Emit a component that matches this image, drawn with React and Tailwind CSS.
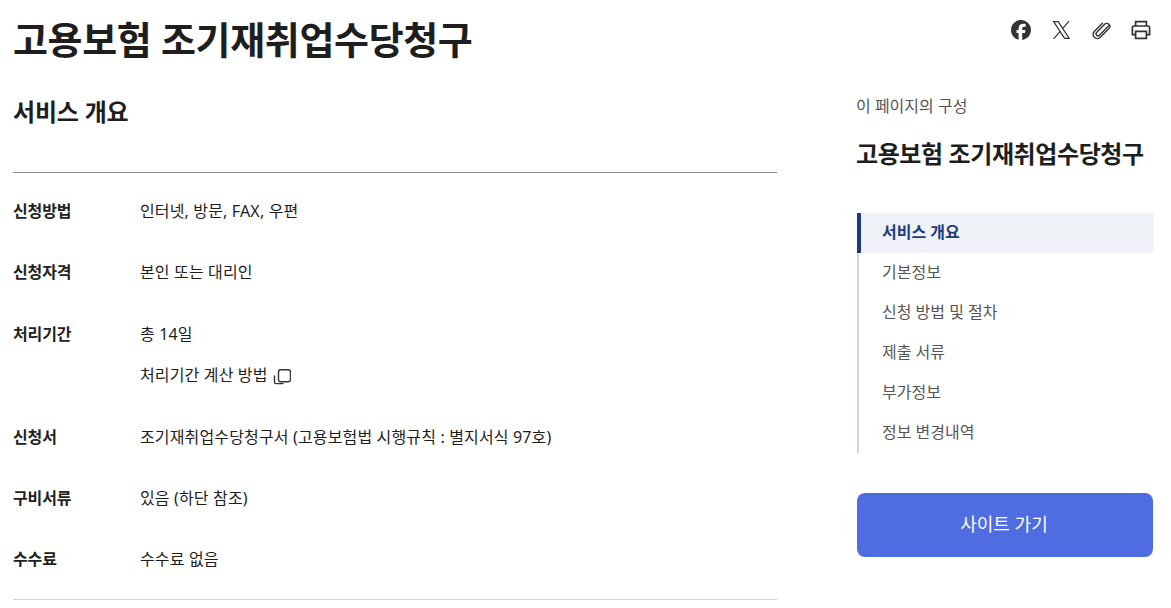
import { SiFacebook } from "react-icons/si";

const rows = [
  { label: "신청방법", lines: ["인터넷, 방문, FAX, 우편"] },
  { label: "신청자격", lines: ["본인 또는 대리인"] },
  { label: "처리기간", lines: ["총 14일", "처리기간 계산 방법"] },
  { label: "신청서", lines: ["조기재취업수당청구서 (고용보험법 시행규칙 : 별지서식 97호)"] },
  { label: "구비서류", lines: ["있음 (하단 참조)"] },
  { label: "수수료", lines: ["수수료 없음"] },
];

const toc = ["기본정보", "신청 방법 및 절차", "제출 서류", "부가정보", "정보 변경내역"];

function CopyIcon() {
  return (
    <svg className="ml-[5px] w-[18px] h-[18px]" viewBox="0 0 18 18" fill="none" stroke="#333" strokeWidth="1.4">
      <rect x="5.5" y="2.7" width="12" height="12" rx="2.2" />
      <path d="M1.5 9v6a1.6 1.6 0 0 0 1.6 1.6H10" strokeLinecap="round" />
    </svg>
  );
}

export default function App() {
  return (
    <div className="w-[1171px] h-[608px] overflow-hidden bg-white text-[#1e1e1e] font-['Noto_Sans','Noto_Sans_CJK_KR',sans-serif]">
      {/* Title bar */}
      <div className="flex justify-between pl-[13px] pr-[20px] h-[82px]">
        <h1 className="text-[38px] leading-[79px] font-bold tracking-[-0.35px]">고용보험 조기재취업수당청구</h1>
        <div className="flex gap-[20px] pt-[20px] text-[#333]">
          <SiFacebook className="w-5 h-5" />
          <svg className="w-5 h-5" viewBox="0 0 20 20" fill="none" stroke="#333" strokeWidth="1.2">
            <path d="M2.6 1.6h4.6l11 16.8h-4.6z" />
            <path d="M18 1.2 11.6 8.6M9.4 11.2 2.6 18.8" />
          </svg>
          <svg className="w-5 h-5" viewBox="0 0 20 20" fill="none" stroke="#333" strokeWidth="1.4" strokeLinecap="round">
            <path d="M17 5.4 8 14.6a1.9 1.9 0 0 1-2.8-2.7l8-8.2a3 3 0 0 1 4.3 4.2l-8.6 8.8a4.2 4.2 0 0 1-6-5.9L11 2.6" transform="translate(0.4 0.6)" />
          </svg>
          <svg className="w-5 h-5" viewBox="0 0 20 20" fill="none" stroke="#333" strokeWidth="1.7">
            <path d="M4.6 6V1.6h10.8V6" />
            <path d="M4.6 14.6H1.4V7.6a1.6 1.6 0 0 1 1.6-1.6h14a1.6 1.6 0 0 1 1.6 1.6v7h-3.2" />
            <path d="M4.6 11.4h10.8v7H4.6z" />
          </svg>
        </div>
      </div>

      <div className="flex pl-[13px] pr-[18px] justify-between">
        {/* Main column */}
        <main className="w-[764px]">
          <h2 className="text-[24px] leading-[60px] font-bold h-[90px] tracking-[-0.2px]">서비스 개요</h2>
          <div className="border-t border-[#8f8f8f] pt-[18px]">
            {rows.map((row) => (
              <div key={row.label} className="flex pb-[20px] last:pb-[18px] text-[16px] leading-[41.4px]">
                <div className="w-[127px] font-bold text-[#222] tracking-[-0.15px]">{row.label}</div>
                <div className="tracking-[0.15px]">
                  {row.lines.map((line) => (
                    <div key={line} className="flex items-center">
                      {line}
                      {line === "처리기간 계산 방법" && <CopyIcon />}
                    </div>
                  ))}
                </div>
              </div>
            ))}
          </div>
          <div className="border-t border-[#cfcfcf]" />
        </main>

        {/* Page outline */}
        <aside className="w-[296px]">
          <p className="text-[16px] leading-[48px] text-[#555] -ml-px">이 페이지의 구성</p>
          <p className="text-[24px] leading-[36px] font-bold mt-[6px] -ml-px whitespace-nowrap tracking-[-0.4px]">고용보험 조기재취업수당청구</p>
          <nav className="mt-[41px] border-l-2 border-[#d0d4e0]">
            <div className="-ml-[2px] h-10 flex items-center pl-[21px] pb-[2px] border-l-4 border-[#1f3b7a] bg-[#eef1f6] font-bold text-[16px] text-[#1f3b7a]">서비스 개요</div>
            {toc.map((item) => (
              <div key={item} className="h-10 flex items-center pl-[23px] pb-[2px] text-[16px] text-[#555]">{item}</div>
            ))}
          </nav>
          <button className="mt-10 w-full h-16 pb-[2px] pr-[2px] rounded-lg bg-[#4f6ce1] text-white text-[18px]">사이트 가기</button>
        </aside>
      </div>
    </div>
  );
}
